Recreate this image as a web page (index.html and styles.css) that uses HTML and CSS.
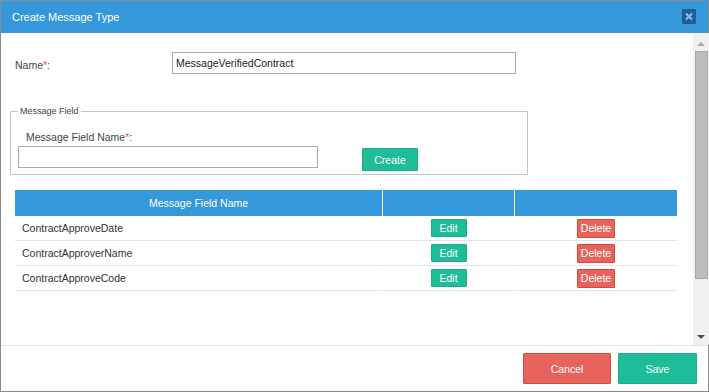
FILE: index.html
```html
<!DOCTYPE html>
<html>
<head>
  <link rel="stylesheet" href="styles.css">
</head>
<body>
  <!-- Modal Section -->
  <div class="modal">
    <div class="modal-header">
      <span class="modal-title">Create Message Type</span>
      <span class="close-btn">
        <svg width="14" height="15" viewBox="0 0 14 15">
          <rect x="0" y="0" width="14" height="15" rx="1" fill="#1f5f98"/>
          <path d="M4 4.5 L10 10.5 M10 4.5 L4 10.5" stroke="#8fbfe8" stroke-width="2"/>
        </svg>
      </span>
    </div>
    <div class="modal-body">
      <div class="body-content">
        <div class="form-row">
          <label class="name-label">Name<span class="req">*</span>:</label>
          <input type="text" class="text-input name-input" value="MessageVerifiedContract">
        </div>
        <fieldset class="field-box">
          <legend>Message Field</legend>
          <div class="field-row">
            <div class="field-group">
              <label class="field-label">Message Field Name<span class="req">*</span>:</label>
              <input type="text" class="text-input field-input">
            </div>
            <button class="button button-green button-create">Create</button>
          </div>
        </fieldset>
        <table class="field-table">
          <thead>
            <tr>
              <th class="col-name">Message Field Name</th>
              <th class="col-edit"></th>
              <th></th>
            </tr>
          </thead>
          <tbody>
            <tr>
              <td>ContractApproveDate</td>
              <td class="center"><button class="button button-green button-small">Edit</button></td>
              <td class="center"><button class="button button-red button-small">Delete</button></td>
            </tr>
            <tr>
              <td>ContractApproverName</td>
              <td class="center"><button class="button button-green button-small">Edit</button></td>
              <td class="center"><button class="button button-red button-small">Delete</button></td>
            </tr>
            <tr>
              <td>ContractApproveCode</td>
              <td class="center"><button class="button button-green button-small">Edit</button></td>
              <td class="center"><button class="button button-red button-small">Delete</button></td>
            </tr>
          </tbody>
        </table>
      </div>
      <!-- Scrollbar drawn as in the screenshot -->
      <div class="scrollbar">
        <span class="arrow-up"></span>
        <span class="thumb"></span>
        <span class="arrow-down"></span>
      </div>
    </div>
    <div class="modal-footer">
      <button class="button button-red button-cancel">Cancel</button>
      <button class="button button-green button-save">Save</button>
    </div>
  </div>
</body>
</html>
```

FILE: styles.css
```css
/* Main Element Styles */
body {
  margin: 0;
  font-family: "Liberation Sans", Arial, sans-serif;
  font-size: 10.5px;
  color: #333;
  background-color: #fff;
}
.modal {
  width: 709px;
  height: 392px;
  box-sizing: border-box;
  border: 1px solid #8a8a8a;
  display: flex;
  flex-direction: column;
  background-color: #fff;
}

/* Header Styles */
.modal-header {
  height: 32px;
  flex: none;
  background-color: #3498db;
  display: flex;
  align-items: center;
  justify-content: space-between;
  padding: 0 12px 0 11px;
}
.modal-title {
  color: #fff;
  font-size: 11px;
}
.close-btn {
  display: flex;
  margin-top: -2px;
}

/* Body Styles */
.modal-body {
  height: 312px;
  flex: none;
  display: flex;
}
.body-content {
  flex: 1;
  padding: 19px 15px 0 14px;
}
.form-row {
  display: flex;
  align-items: flex-start;
}
.name-label {
  width: 157px;
  line-height: 22px;
  margin-top: 2px;
  color: #444;
}
.req {
  color: #e8574f;
}
.text-input {
  box-sizing: border-box;
  height: 22px;
  border: 1px solid #a9a9a9;
  padding: 0 3px;
  font-family: "Liberation Sans", Arial, sans-serif;
  font-size: 10.5px;
  color: #222;
  outline: none;
}
.name-input {
  width: 344px;
}

/* Fieldset Styles */
.field-box {
  width: 518px;
  box-sizing: border-box;
  margin: 30px 0 0 -5px;
  padding: 14px 7px 3px 7px;
  border: 1px solid #c4c4c4;
}
.field-box legend {
  font-size: 9px;
  line-height: 11px;
  padding: 0 2px;
  color: #444;
}
.field-row {
  display: flex;
  align-items: flex-start;
}
.field-group {
  display: flex;
  flex-direction: column;
  gap: 3px;
}
.field-label {
  line-height: 12px;
  padding-left: 8px;
  color: #444;
}
.field-input {
  width: 300px;
}

/* Button Styles */
.button {
  font-family: "Liberation Sans", Arial, sans-serif;
  font-size: 10.5px;
  color: #fff;
  border: 1px solid transparent;
  border-radius: 1px;
  padding: 0 3px;
  cursor: pointer;
}
.button-green {
  background-color: #1dbd9a;
  border-color: #1aae8e;
}
.button-red {
  background-color: #e6645c;
  border-color: #d8463e;
}
.button-create {
  width: 56px;
  height: 23px;
  margin: 17px 0 0 44px;
}
.button-small {
  min-width: 36px;
  height: 18px;
  line-height: 16px;
  font-size: 10.5px;
}
.button-red.button-small {
  height: 19px;
}
.button-cancel {
  width: 88px;
  height: 31px;
}
.button-save {
  width: 79px;
  height: 31px;
}

/* Table Styles */
.field-table {
  width: 664px;
  margin: 15px 0 0 -1px;
  table-layout: fixed;
  border-collapse: separate;
  border-spacing: 1px 0;
}
.field-table th {
  height: 26px;
  padding: 0;
  background-color: #3498db;
  color: #fff;
  font-weight: normal;
  font-size: 10.5px;
}
.col-name {
  width: 367px;
}
.col-edit {
  width: 131px;
}
.field-table td {
  height: 24px;
  padding: 0 0 0 7px;
  border-bottom: 1px solid #e2e2e2;
  color: #333;
}
.field-table td.center {
  padding: 0;
  text-align: center;
}

/* Scrollbar Styles */
.scrollbar {
  width: 16px;
  flex: none;
  background-color: #f0f0f0;
  display: flex;
  flex-direction: column;
  align-items: center;
  padding: 9px 0 6px;
  box-sizing: border-box;
}
.arrow-up {
  width: 0;
  height: 0;
  border-left: 4px solid transparent;
  border-right: 4px solid transparent;
  border-bottom: 4px solid #a6a6a6;
}
.thumb {
  width: 13px;
  height: 228px;
  box-sizing: border-box;
  margin-top: 5px;
  background-color: #bdbdbd;
  border: 1px solid #a9a9a9;
}
.arrow-down {
  width: 0;
  height: 0;
  margin-top: auto;
  border-left: 4px solid transparent;
  border-right: 4px solid transparent;
  border-top: 4px solid #505050;
}

/* Footer Styles */
.modal-footer {
  flex: 1;
  border-top: 1px solid #e5e5e5;
  display: flex;
  justify-content: flex-end;
  align-items: flex-start;
  gap: 7px;
  padding: 7px 11px 0 0;
}
```
